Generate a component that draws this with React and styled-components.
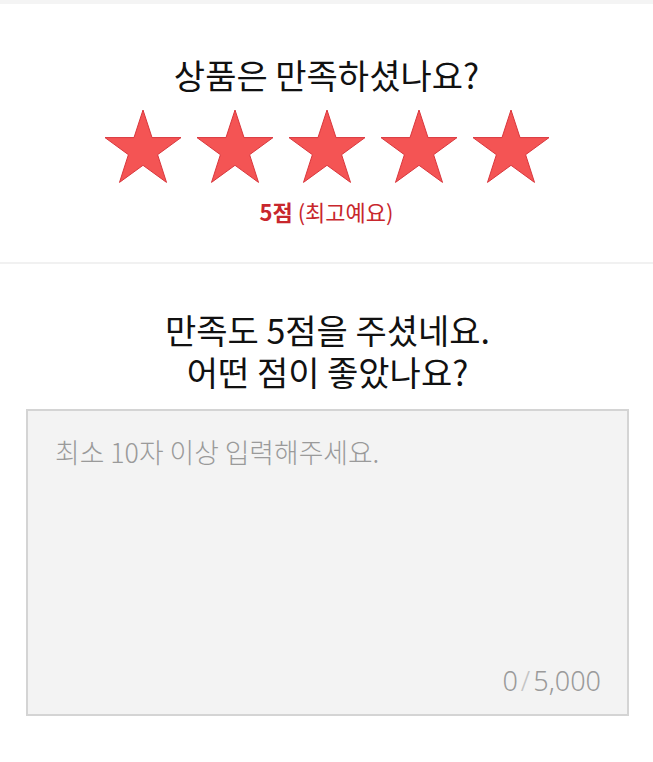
import React, { useState } from 'react'
import styled, { createGlobalStyle } from 'styled-components'

const GlobalStyle = createGlobalStyle`
  body {
    margin: 0;
    background: #ffffff;
    font-family: "Noto Sans CJK KR", "Noto Sans", sans-serif;
    color: #111;
  }
`
const Page = styled.div`
  width: 100%;
  min-height: 762px;
  background: #ffffff;
`
const TopBar = styled.div`
  height: 4px;
  background-color: #f4f4f4;
`
const RatingSection = styled.section`
  display: flex;
  flex-direction: column;
  align-items: center;
  padding: 50px 0 38px;
  border-bottom: 2px solid #f1f1f1;
`
const Title = styled.h2`
  margin: 0;
  font-size: 34px;
  font-weight: 400;
  line-height: 42px;
  text-align: center;
`
const StarRow = styled.div`
  display: flex;
  gap: 12px;
  margin-top: 13px;
`
const StarButton = styled.button`
  border: none;
  background: none;
  padding: 0;
  cursor: pointer;
  display: flex;
`
const ScoreText = styled.p`
  margin: 13px 0 0;
  font-size: 22px;
  line-height: 26px;
  color: #c8272d;
  strong {
    font-weight: 700;
  }
`
const ReviewSection = styled.section`
  display: flex;
  flex-direction: column;
  align-items: center;
  padding: 45px 24px 0 26px;
`
const TextBox = styled.div`
  width: 100%;
  height: 307px;
  margin-top: 16px;
  box-sizing: border-box;
  border: 2px solid #d4d4d4;
  background: #f3f3f3;
  display: flex;
  flex-direction: column;
`
const TextArea = styled.textarea`
  flex: 1;
  border: none;
  outline: none;
  resize: none;
  background: transparent;
  padding: 23px 27px 0;
  font-family: "Noto Sans CJK KR", "Noto Sans", sans-serif;
  font-size: 26.8px;
  line-height: 36px;
  font-weight: 300;
  color: #333;
  &::placeholder {
    color: #9a9a9a;
  }
`
const Counter = styled.div`
  align-self: flex-end;
  padding: 0 26px 15px 0;
  font-family: "Noto Sans", sans-serif;
  font-size: 27px;
  line-height: 36px;
  font-weight: 300;
  color: #9a9a9a;
  span {
    color: #c4c4c4;
    margin: 0 3px;
  }
`

const Star = ({ on }) => (
  <svg width="80" height="76" viewBox="0 0 80 76">
    <polygon
      points="40,1 49,28.6 78,28.6 54.6,45.7 63.5,73.4 40,56.3 16.5,73.4 25.4,45.7 2,28.6 31,28.6"
      fill={on ? '#f45454' : '#e2e2e2'}
      stroke={on ? '#d9363c' : '#cfcfcf'}
      strokeWidth="1"
      strokeLinejoin="round"
    />
  </svg>
)

const labels = ['별로예요', '그저그래요', '괜찮아요', '좋아요', '최고예요']

const App = () => {
  const [score, setScore] = useState(5)
  const [text, setText] = useState('')
  return (
    <Page>
      <GlobalStyle />
      <TopBar />
      <RatingSection>
        <Title>상품은 만족하셨나요?</Title>
        <StarRow>
          {[1, 2, 3, 4, 5].map((n) => (
            <StarButton key={n} onClick={() => setScore(n)}>
              <Star on={n <= score} />
            </StarButton>
          ))}
        </StarRow>
        <ScoreText>
          <strong>{score}점</strong> ({labels[score - 1]})
        </ScoreText>
      </RatingSection>
      <ReviewSection>
        <Title>
          만족도 {score}점을 주셨네요.
          <br />
          어떤 점이 좋았나요?
        </Title>
        <TextBox>
          <TextArea
            value={text}
            onChange={(e) => setText(e.target.value)}
            placeholder="최소 10자 이상 입력해주세요."
            maxLength={5000}
          />
          <Counter>
            {text.length.toLocaleString()}<span>/</span>5,000
          </Counter>
        </TextBox>
      </ReviewSection>
    </Page>
  )
}

export default App
